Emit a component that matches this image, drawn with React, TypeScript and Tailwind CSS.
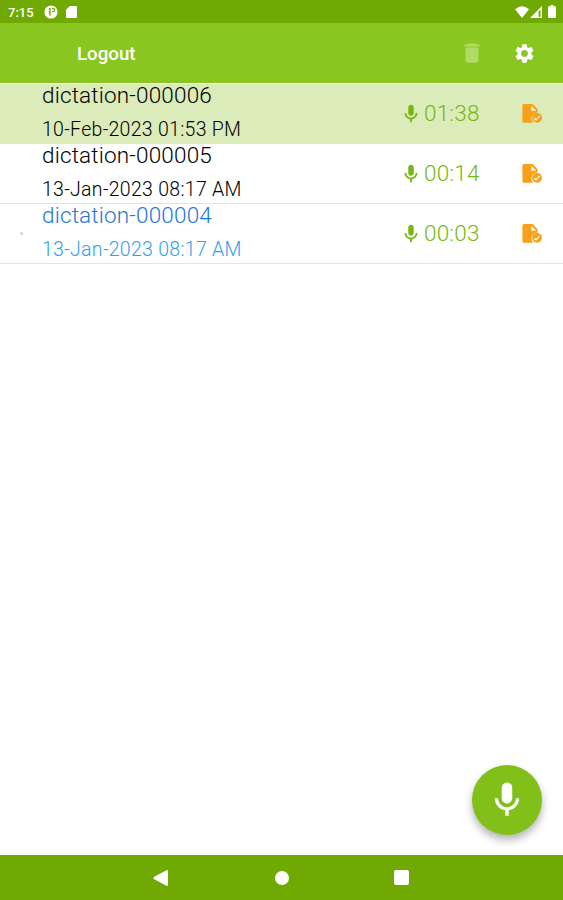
import React from 'react';

interface Dictation {
  name: string;
  date: string;
  length: string;
  selected?: boolean;
  playing?: boolean;
}

const dictations: Dictation[] = [
  { name: 'dictation-000006', date: '10-Feb-2023 01:53 PM', length: '01:38', selected: true },
  { name: 'dictation-000005', date: '13-Jan-2023 08:17 AM', length: '00:14' },
  { name: 'dictation-000004', date: '13-Jan-2023 08:17 AM', length: '00:03', playing: true },
];

const MicIcon = ({ className }: { className: string }) => (
  <svg viewBox="0 0 24 24" fill="currentColor" className={className}>
    <path d="M12 14c1.66 0 3-1.34 3-3V5c0-1.66-1.34-3-3-3S9 3.34 9 5v6c0 1.66 1.34 3 3 3z" />
    <path d="M17.1 11c0 2.8-2.3 5.1-5.1 5.1S6.9 13.8 6.9 11H5c0 3.5 2.6 6.4 6 6.9V21h2v-3.1c3.4-.5 6-3.4 6-6.9z" />
  </svg>
);

const FileIcon = () => (
  <svg viewBox="0 0 21 20" className="h-5 w-[21px]">
    <path d="M2 0h8.600l5 5.300v3.200a6 6 0 0 0-6.200 5.800c0 1.900.7 3.300 1.800 4.500H2a1.600 1.600 0 0 1-1.600-1.600V1.600A1.600 1.600 0 0 1 2 0z" fill="#f9a01b" />
    <path d="M9.300 1.800v5h4.800z" fill="#fff" />
    <circle cx="15" cy="13.800" r="4.900" fill="#f9a01b" />
    <path d="M12.300 14.200l1.700 1.600 3.700-3.900" fill="none" stroke="#fff" strokeWidth="1.200" />
  </svg>
);

const StatusBar = () => (
  <div className="flex h-[23px] items-center bg-[#6fa901] pl-2 pr-[7px] text-white">
    <span className="w-9 pt-px text-[13px] font-medium leading-none">7:15</span>
    <svg viewBox="0 0 14 14" className="h-[14px] w-[14px]">
      <circle cx="7" cy="7" r="6.600" fill="#fff" />
      <path d="M5.900 3v7.500" fill="none" stroke="#6fa901" strokeWidth="1.500" />
      <path d="M8 3.600h1.200a1.500 1.500 0 0 1 0 3H8" fill="none" stroke="#6fa901" strokeWidth="1.300" />
    </svg>
    <svg viewBox="0 0 11 12" className="ml-2 h-3 w-[11px]">
      <path d="M3.800 0H10q1 0 1 1v10q0 1-1 1H1q-1 0-1-1V3.800z" fill="#fff" />
    </svg>
    <svg viewBox="0 0 14 12" className="ml-auto h-3 w-[14px]">
      <path d="M0 3.200Q7-2.600 14 3.200L7 12z" fill="#fff" />
    </svg>
    <svg viewBox="0 0 12 12" className="ml-px h-3 w-3">
      <path d="M12 0v12H0z" fill="#fff" />
      <path d="M8.600 4.500h1.900v6.300H8.600z" fill="#6fa901" />
    </svg>
    <svg viewBox="0 0 8 13" className="ml-[6px] h-[13px] w-2">
      <path d="M2.500 0h3v1.300H7q1 0 1 1V12q0 1-1 1H1q-1 0-1-1V2.300q0-1 1-1h1.500z" fill="#fff" />
    </svg>
  </div>
);

const Toolbar = () => (
  <div className="flex h-[60px] items-center bg-[#89c720] pl-[77px] pr-[27px] text-white">
    <span className="pt-[3px] text-[18.700px] font-medium leading-none">Logout</span>
    <svg viewBox="0 0 24 24" className="ml-auto h-[26px] w-[26px] text-[#b1db68]" fill="currentColor">
      <path d="M6 19c0 1.100.9 2 2 2h8c1.100 0 2-.9 2-2V7H6v12zM19 4h-3.500l-1-1h-5l-1 1H5v2h14V4z" />
    </svg>
    <svg viewBox="0 0 24 24" className="ml-[28px] h-[23px] w-[23px]" fill="currentColor">
      <path d="M19.140 12.940c.04-.3.060-.61.060-.94s-.02-.64-.07-.94l2.030-1.580c.18-.14.23-.41.12-.61l-1.920-3.320c-.12-.22-.37-.29-.59-.22l-2.390.96c-.5-.38-1.030-.7-1.620-.94L14.400 2.810c-.04-.24-.24-.41-.48-.41h-3.840c-.24 0-.43.17-.47.41L9.250 5.350c-.59.24-1.130.57-1.620.94L5.240 5.330c-.22-.08-.47 0-.59.22L2.740 8.870c-.12.21-.08.47.12.61l2.030 1.580c-.05.3-.09.63-.09.94s.02.64.07.94l-2.030 1.580c-.18.14-.23.41-.12.61l1.920 3.320c.12.22.37.29.59.22l2.390-.96c.5.38 1.030.7 1.620.94l.36 2.540c.05.24.24.41.48.41h3.840c.24 0 .44-.17.47-.41l.36-2.540c.59-.24 1.130-.56 1.620-.94l2.390.96c.22.08.47 0 .59-.22l1.920-3.320c.12-.22.07-.47-.12-.61l-2.010-1.580zM12 15.600c-1.980 0-3.600-1.620-3.600-3.600s1.620-3.600 3.600-3.600 3.600 1.620 3.600 3.600-1.620 3.600-3.600 3.600z" />
    </svg>
  </div>
);

const DictationRow: React.FC<{ item: Dictation }> = ({ item }) => (
  <li className={`flex h-[60px] items-center border-b border-[#e2e2e2] pr-5 ${item.selected ? 'bg-[#dbecba]' : 'bg-white'}`}>
    <div className="flex w-[42px] justify-center">
      {item.playing && <span className="-mt-px h-[3px] w-[3px] rounded-full bg-[#c3d3df]" />}
    </div>
    <div className="flex h-full flex-col whitespace-nowrap">
      <span className={`h-[34px] text-[22.500px] font-light leading-[23px] tracking-[0.180px] ${item.playing ? 'text-[#1f75d8]' : 'text-black'}`}>{item.name}</span>
      <span className={`text-[19.500px] font-light leading-[26px] tracking-[0.290px] ${item.playing ? 'text-[#329def]' : 'text-black'}`}>{item.date}</span>
    </div>
    <div className="ml-auto flex items-center text-[#76b810]">
      <MicIcon className="h-[22px] w-[22px]" />
      <span className="ml-[2px] w-[57px] text-[22.500px] font-light leading-none tracking-[0.200px]">{item.length}</span>
    </div>
    <div className="ml-[41px]">
      <FileIcon />
    </div>
  </li>
);

const NavBar = () => (
  <div className="flex h-[45px] items-center bg-[#6fa901] pl-[153px] text-white">
    <svg viewBox="0 0 15 16" className="h-4 w-[15px]" fill="currentColor">
      <path d="M14 0q1 0 1 1v14q0 1-1 1L.8 9Q0 8 .8 7z" />
    </svg>
    <span className="ml-[107px] h-[14px] w-[14px] rounded-full bg-white" />
    <span className="ml-[105px] h-[15px] w-[15px] rounded-[2px] bg-white" />
  </div>
);

export default function App() {
  return (
    <div className="relative flex h-[900px] w-[563px] flex-col overflow-hidden bg-white font-['Roboto',sans-serif]">
      <StatusBar />
      <Toolbar />
      <ul className="flex-1 pt-px">
        {dictations.map((item) => (
          <DictationRow key={item.name} item={item} />
        ))}
      </ul>
      <NavBar />
      <button className="absolute bottom-[65px] right-[21px] flex h-[70px] w-[70px] items-center justify-center rounded-full bg-[#80c019] text-white shadow-[0_5px_9px_rgba(0,0,0,0.3)]">
        <MicIcon className="h-[42px] w-[42px]" />
      </button>
    </div>
  );
}
